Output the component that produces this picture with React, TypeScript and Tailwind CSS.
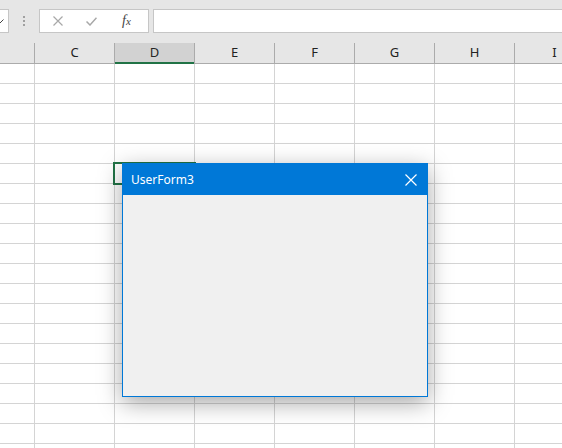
const columns = ["C", "D", "E", "F", "G", "H", "I"];
const rowCount = 20;

function FormulaBar() {
  return (
    <div className="flex h-[43px] items-start bg-[#e6e6e6] pt-[9px]">
      <div className="flex h-[24px] w-[9px] items-center overflow-hidden border border-l-0 border-[#c6c6c6] bg-white">
        <svg width="8" height="6" viewBox="0 0 8 6" className="-ml-[4px] shrink-0">
          <path d="M0.5 1.5 L4 5 L7.5 1.5" fill="none" stroke="#444" strokeWidth="1" />
        </svg>
      </div>
      <div className="ml-[14px] mr-[14px] flex h-[24px] flex-col items-center justify-center gap-[2px]">
        <span className="h-[2px] w-[2px] bg-[#a0a0a0]" />
        <span className="h-[2px] w-[2px] bg-[#a0a0a0]" />
        <span className="h-[2px] w-[2px] bg-[#a0a0a0]" />
      </div>
      <div className="flex h-[24px] w-[110px] items-center border border-[#c6c6c6] bg-white">
        <svg width="10" height="10" viewBox="0 0 10 10" className="ml-[13px]">
          <path d="M0.5 0.5 L9.5 9.5 M9.5 0.5 L0.5 9.5" stroke="#a8a8a8" strokeWidth="1.2" />
        </svg>
        <svg width="11" height="9" viewBox="0 0 11 9" className="ml-[23px]">
          <path d="M0.5 4.5 L4 8 L10.5 0.8" fill="none" stroke="#a8a8a8" strokeWidth="1.5" />
        </svg>
        <span className="ml-[25px] font-['Liberation_Serif',serif] text-[14px] italic leading-none text-[#444]">
          f<span className="text-[11px]">x</span>
        </span>
      </div>
      <div className="ml-[4px] h-[24px] flex-1 border border-r-0 border-[#c6c6c6] bg-white" />
    </div>
  );
}

function HeaderRow() {
  return (
    <div className="flex h-[21px] border-b border-[#ababab] bg-[#e6e6e6] font-['Noto_Sans',sans-serif] text-[13px] text-[#222]">
      <div className="w-[35px] shrink-0 border-r border-[#ababab]" />
      {columns.map((c) => (
        <div
          key={c}
          className={
            c === "D"
              ? "relative flex w-[80px] shrink-0 items-center justify-center border-r border-[#ababab] bg-[#d2d2d2] text-[#262626]"
              : "flex w-[80px] shrink-0 items-center justify-center border-r border-[#ababab]"
          }
        >
          {c}
          {c === "D" && <div className="absolute -bottom-[1px] left-0 right-0 h-[2px] bg-[#217346]" />}
        </div>
      ))}
    </div>
  );
}

function GridRows() {
  return (
    <div className="flex flex-col bg-white">
      {Array.from({ length: rowCount }).map((_, r) => (
        <div key={r} className="flex h-[20px] shrink-0 border-b border-[#d4d4d4]">
          <div className="w-[35px] shrink-0 border-r border-[#d4d4d4]" />
          {columns.map((c) => (
            <div key={c} className="w-[80px] shrink-0 border-r border-[#d4d4d4]" />
          ))}
        </div>
      ))}
    </div>
  );
}

function UserForm() {
  return (
    <div className="absolute left-[122px] top-[163px] flex h-[234px] w-[306px] flex-col border border-[#0078d7] bg-[#f0f0f0] shadow-[0_6px_22px_rgba(0,0,0,0.35)]">
      <div className="flex h-[31px] items-center justify-between bg-[#0078d7] pl-[8px] pr-[10px] font-['Noto_Sans',sans-serif] text-[12px] text-white">
        <span>UserForm3</span>
        <svg width="12" height="12" viewBox="0 0 12 12">
          <path d="M0.5 0.5 L11.5 11.5 M11.5 0.5 L0.5 11.5" stroke="white" strokeWidth="1.2" />
        </svg>
      </div>
    </div>
  );
}

export default function App() {
  return (
    <div className="relative h-[448px] w-[562px] overflow-hidden bg-white">
      <FormulaBar />
      <HeaderRow />
      <GridRows />
      {/* active cell D, row under the form */}
      <div className="absolute left-[113px] top-[162px] h-[23px] w-[83px] border-2 border-[#217346]" />
      <UserForm />
    </div>
  );
}
